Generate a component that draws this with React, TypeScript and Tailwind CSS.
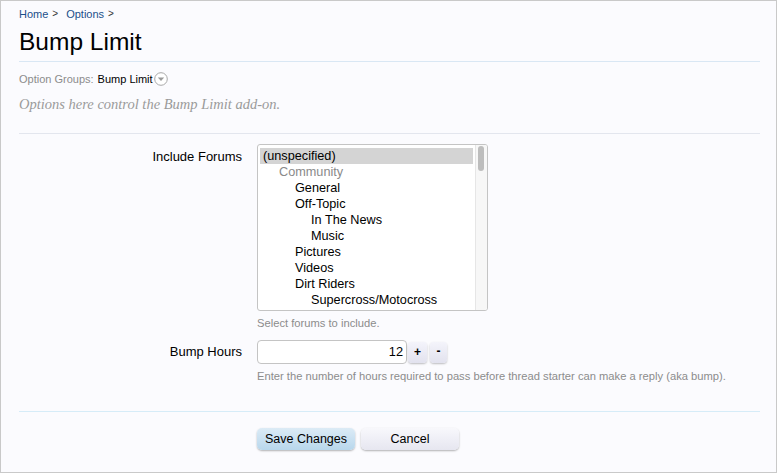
import React from "react";

const items: { label: string; indent: number; gray?: boolean; selected?: boolean }[] = [
  { label: "(unspecified)", indent: 0, selected: true },
  { label: "Community", indent: 1, gray: true },
  { label: "General", indent: 2 },
  { label: "Off-Topic", indent: 2 },
  { label: "In The News", indent: 3 },
  { label: "Music", indent: 3 },
  { label: "Pictures", indent: 2 },
  { label: "Videos", indent: 2 },
  { label: "Dirt Riders", indent: 2 },
  { label: "Supercross/Motocross", indent: 3 },
];

const indentClass = ["pl-[3px]", "pl-[19px]", "pl-[35px]", "pl-[51px]"];

export default function App() {
  return (
    <div
      className="w-[777px] h-[474px] bg-white"
      style={{ fontFamily: '"Trebuchet MS", "Liberation Sans", Arial, sans-serif' }}
    >
      <div className="w-[777px] h-[473px] border border-[#c9c9c9] bg-[#fbfbfe] pl-[18px] pr-[16px] text-black">
        {/* breadcrumb */}
        <div className="flex items-center h-[14px] mt-[6px] text-[11px] leading-[14px] text-[#1b4f8a]">
          <span>Home</span>
          <span className="ml-[4px] text-[#333] text-[10px]">&gt;</span>
          <span className="ml-[8px]">Options</span>
          <span className="ml-[4px] text-[#333] text-[10px]">&gt;</span>
        </div>
        {/* title */}
        <h1 className="mt-[8px] h-[26px] text-[24.5px] leading-[26px]">Bump Limit</h1>
        <div className="mt-[6px] h-px bg-[#d9e7f4]" />
        {/* option groups */}
        <div className="mt-[10px] flex items-center h-[14px] text-[11px] leading-[14px]">
          <span className="text-[#8c8c8c]">Option Groups:</span>
          <span className="ml-[4px]">Bump Limit</span>
          <svg width="14" height="14" viewBox="0 0 14 14" className="ml-[1px]">
            <circle cx="7" cy="7" r="6.3" fill="#fff" stroke="#a8a8a8" strokeWidth="1" />
            <path d="M3.8 5.5 L10.2 5.5 L7 9 Z" fill="#9a9a9a" />
          </svg>
        </div>
        <div
          className="mt-[9px] h-[18px] leading-[18px] italic text-[#9a9a9a]"
          style={{ fontFamily: '"Liberation Serif", Georgia, serif', fontSize: "14.5px" }}
        >
          Options here control the Bump Limit add-on.
        </div>
        <div className="mt-[20px] h-px bg-[#e3e6ee]" />

        {/* Include forums */}
        <div className="mt-[10px] flex">
          <div className="w-[238px] pr-[15px] text-right text-[13px] leading-[16px] pt-[5px]">Include Forums</div>
          <div>
            <div className="relative w-[231px] h-[167px] border border-[#c4c4c4] rounded-[3px] bg-white overflow-hidden">
              <div className="pt-[3px] pl-[2px] pr-[14px] text-[12.7px] leading-[16px]">
                {items.map((it) => (
                  <div
                    key={it.label}
                    className={`h-[16px] whitespace-nowrap ${indentClass[it.indent]} ${
                      it.selected ? "bg-[#d4d4d4]" : ""
                    } ${it.gray ? "text-[#8a8a8a]" : "text-black"}`}
                  >
                    {it.label}
                  </div>
                ))}
              </div>
              <div className="absolute right-0 top-0 bottom-0 w-[12px] bg-[#f7f7f7] border-l border-[#e6e6e6]">
                <div className="mt-[1px] ml-[2px] w-[6px] h-[25px] rounded-[3px] bg-[#bdbdbd]" />
              </div>
            </div>
            <div className="mt-[5px] text-[11.2px] leading-[14px] text-[#8c8c8c]">Select forums to include.</div>
          </div>
        </div>

        {/* Bump Hours */}
        <div className="mt-[10px] flex">
          <div className="w-[238px] pr-[15px] text-right text-[13px] leading-[16px] pt-[4px]">Bump Hours</div>
          <div>
            <div className="flex items-center">
              <div className="w-[150px] h-[24px] border border-[#c4c4c4] rounded-[4px] bg-white text-right pr-[3px] text-[12.8px] leading-[22px]">
                12
              </div>
              <div className="ml-[1px] w-[19px] h-[21px] rounded-[4px] bg-gradient-to-b from-[#f4f4fb] to-[#e2e2ee] shadow-[0_1px_2px_rgba(0,0,0,0.25)] text-center text-[12px] leading-[20px] font-bold">
                +
              </div>
              <div className="ml-[3px] w-[17px] h-[21px] rounded-[4px] bg-gradient-to-b from-[#f4f4fb] to-[#e2e2ee] shadow-[0_1px_2px_rgba(0,0,0,0.25)] text-center text-[12px] leading-[19px] font-bold">
                -
              </div>
            </div>
            <div className="mt-[5px] text-[11.2px] leading-[14px] text-[#8c8c8c] whitespace-nowrap">
              Enter the number of hours required to pass before thread starter can make a reply (aka bump).
            </div>
          </div>
        </div>

        <div className="mt-[28px] h-px bg-[#d6ecf8]" />

        <div className="mt-[16px] flex pl-[238px]">
          <div className="w-[98px] h-[22px] rounded-[5px] bg-gradient-to-b from-[#dcebf6] to-[#b8d7ec] shadow-[0_1px_2px_rgba(0,0,0,0.3)] text-center text-[12.5px] leading-[22px]">
            Save Changes
          </div>
          <div className="ml-[6px] w-[98px] h-[22px] rounded-[5px] bg-gradient-to-b from-[#f8f8fc] to-[#e6e6f0] shadow-[0_1px_2px_rgba(0,0,0,0.3)] text-center text-[12.5px] leading-[22px]">
            Cancel
          </div>
        </div>
      </div>
    </div>
  );
}
